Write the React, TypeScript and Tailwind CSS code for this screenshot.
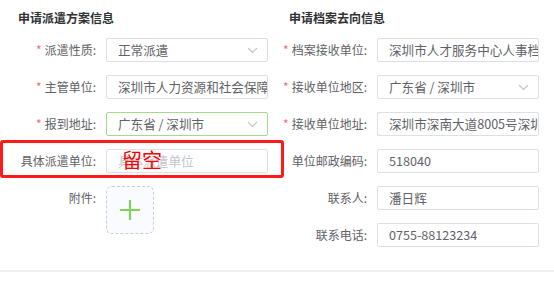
const font = "font-['Noto_Sans_CJK_SC','Noto_Sans',sans-serif]";

function Chevron() {
  return (
    <svg width="11" height="7" viewBox="0 0 11 7" fill="none" className="shrink-0">
      <polyline points="1,1 5.5,5.5 10,1" stroke="#c0c4cc" strokeWidth="1.1" />
    </svg>
  );
}

function Field({
  label,
  required,
  value,
  placeholder,
  select,
  active,
}: {
  label: string;
  required?: boolean;
  value?: string;
  placeholder?: string;
  select?: boolean;
  active?: boolean;
}) {
  return (
    <div className="flex items-center h-[24px]">
      <div className="w-[97px] pr-[1px] text-right text-[12px] leading-[24px] text-[#606266] whitespace-nowrap">
        {required && <span className="text-[#f56c6c] mr-[3px]">*</span>}
        {label}:
      </div>
      <div
        className={`ml-[9px] w-[162px] h-[24px] flex items-center justify-between pl-[11px] border rounded-[2px] overflow-hidden bg-white ${
          select ? "pr-[9px]" : ""
        } ${active ? "border-[#a6da8e]" : "border-[#dcdfe6]"}`}
      >
        <span
          className={`text-[12.6px] whitespace-nowrap overflow-hidden ${
            value ? "text-[#606266]" : "text-[#c0c4cc]"
          }`}
        >
          {value || placeholder}
        </span>
        {select && <Chevron />}
      </div>
    </div>
  );
}

export default function App() {
  return (
    <div className={`relative w-[554px] h-[284px] bg-white ${font}`}>
      <div className="flex h-[270px]">
        <div className="w-[271px]">
          <h3 className="pl-[18px] pt-[10px] h-[38px] text-[12px] leading-[16px] font-bold text-[#303133]">
            申请派遣方案信息
          </h3>
          <div className="flex flex-col gap-[13px]">
            <Field label="派遣性质" required value="正常派遣" select />
            <Field label="主管单位" required value="深圳市人力资源和社会保障局" />
            <Field label="报到地址" required value="广东省 / 深圳市" select active />
            <Field label="具体派遣单位" placeholder="具体派遣单位" />
            <div className="flex items-start">
              <div className="w-[97px] pr-[1px] text-right text-[12px] leading-[24px] text-[#606266]">
                附件:
              </div>
              <button className="ml-[9px] w-[48px] h-[48px] flex items-center justify-center rounded-[6px] border border-dashed border-[#c6cfdf] bg-[#fafbfe]">
                <svg width="22" height="22" viewBox="0 0 22 22">
                  <path d="M11 1v20M1 11h20" stroke="#7fd35c" strokeWidth="2.2" />
                </svg>
              </button>
            </div>
          </div>
        </div>
        <div className="flex-1">
          <h3 className="pl-[18px] pt-[10px] h-[38px] text-[12px] leading-[16px] font-bold text-[#303133]">
            申请档案去向信息
          </h3>
          <div className="flex flex-col gap-[13px]">
            <Field label="档案接收单位" required value="深圳市人才服务中心人事档案室" />
            <Field label="接收单位地区" required value="广东省 / 深圳市" select />
            <Field label="接收单位地址" required value="深圳市深南大道8005号深圳人才大厦" />
            <Field label="单位邮政编码" value="518040" />
            <Field label="联系人" value="潘日辉" />
            <Field label="联系电话" value="0755-88123234" />
          </div>
        </div>
      </div>
      <div className="h-[2px] bg-[#eeeeee]" />

      <div className="absolute left-0 top-[140px] w-[284px] h-[38px] border-[3px] border-[#ff1a1a] rounded-[3px]" />
      <div className="absolute left-[122px] top-[149px] text-[20px] leading-[22px] text-[#ff0000]">留空</div>
    </div>
  );
}
